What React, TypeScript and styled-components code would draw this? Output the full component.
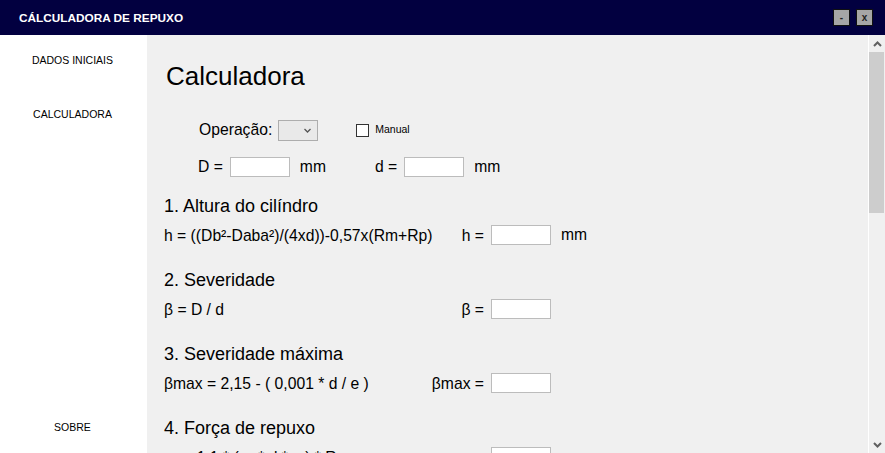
import * as React from 'react';
import styled, { createGlobalStyle } from 'styled-components';

const GlobalStyle = createGlobalStyle`
    html, body {
        margin: 0;
        padding: 0;
        background: #ffffff;
    }
    body {
        font-family: "Liberation Sans", Arial, sans-serif;
        color: #000;
    }
`;

const Window = styled.div`
    width: 885px;
    height: 453px;
    display: flex;
    flex-direction: column;
    overflow: hidden;
`;

const TitleBar = styled.div`
    height: 35px;
    flex: 0 0 35px;
    background: #020040;
    display: flex;
    align-items: center;
    padding: 0 12px 0 19px;
`;

const Title = styled.div`
    color: #ffffff;
    font-weight: bold;
    font-size: 11.8px;
    flex: 1;
`;

const WinButton = styled.div`
    width: 15px;
    height: 15px;
    border: 1px solid #111;
    background: #a6a6a6;
    margin-left: 6px;
    display: flex;
    align-items: center;
    justify-content: center;
    font-size: 10px;
    font-weight: bold;
    color: #222;
    line-height: 1;
`;

const Body = styled.div`
    flex: 1;
    display: flex;
    min-height: 0;
`;

const Sidebar = styled.nav`
    width: 147px;
    flex: 0 0 147px;
    background: #ffffff;
    display: flex;
    flex-direction: column;
    padding: 17px 2px 18px 0;
    box-sizing: border-box;
`;

const NavItem = styled.div<{ $bottom?: boolean }>`
    height: 16px;
    line-height: 16px;
    font-size: 10.5px;
    text-align: center;
    color: #000;
    margin-bottom: 38px;
    ${(props) => props.$bottom && 'margin-top: auto; margin-bottom: 0;'}
`;

const Panel = styled.main`
    flex: 1;
    background: #f0f0f0;
    overflow: hidden;
    padding: 26px 0 0 17px;
    box-sizing: border-box;
`;

const PageTitle = styled.h1`
    margin: 0 0 0 2px;
    font-weight: normal;
    font-size: 26px;
    line-height: 30px;
    height: 30px;
`;

const Row = styled.div<{ $indent: number; $top: number }>`
    display: flex;
    align-items: center;
    height: 20px;
    margin-left: ${(props) => props.$indent}px;
    margin-top: ${(props) => props.$top}px;
    font-size: 15.7px;
`;

const Label = styled.span<{ $gap?: number }>`
    margin-left: ${(props) => props.$gap || 0}px;
    margin-right: 7px;
    white-space: nowrap;
`;

const TextBox = styled.div<{ $width?: number }>`
    width: ${(props) => props.$width || 60}px;
    height: 20px;
    box-sizing: border-box;
    border: 1px solid #bcbcbc;
    background: #ffffff;
    flex: 0 0 auto;
`;

const Unit = styled.span`
    margin-left: 10px;
`;

const Select = styled.div`
    width: 40px;
    height: 21px;
    box-sizing: border-box;
    border: 1px solid #adadad;
    background: #e9e9e9;
    display: flex;
    align-items: center;
    justify-content: flex-end;
    padding-right: 6px;
    margin-left: -1px;
`;

const CheckBox = styled.div`
    width: 13px;
    height: 13px;
    box-sizing: border-box;
    border: 1px solid #333;
    background: #ffffff;
    margin-left: 38px;
`;

const SmallLabel = styled.span`
    font-size: 10.5px;
    margin-left: 6px;
    margin-top: -3px;
`;

const Section = styled.section<{ $top: number }>`
    margin-top: ${(props) => props.$top}px;
`;

const Heading = styled.h2`
    margin: 0;
    font-weight: normal;
    font-size: 18px;
    line-height: 22px;
    height: 22px;
`;

const FormulaRow = styled.div`
    display: grid;
    grid-template-columns: 248px 79px 60px auto;
    align-items: center;
    height: 20px;
    margin-top: 8px;
    font-size: 15.7px;
`;

const Formula = styled.span`
    white-space: nowrap;
    padding-top: 2px;
`;

const ResultLabel = styled.span`
    text-align: right;
    padding: 2px 7px 0 0;
    white-space: nowrap;
`;

const ScrollBar = styled.div`
    width: 17px;
    flex: 0 0 17px;
    box-sizing: border-box;
    border-left: 1px solid #ffffff;
    background: #f0f0f0;
    display: flex;
    flex-direction: column;
`;

const ScrollArrow = styled.div`
    height: 17px;
    display: flex;
    align-items: center;
    justify-content: center;
`;

const ScrollTrack = styled.div`
    flex: 1;
    padding-right: 1px;
`;

const ScrollThumb = styled.div`
    height: 161px;
    background: #cdcdcd;
`;

const Chevron = ({ up }: { up?: boolean }) => (
    <svg width="9" height="6" viewBox="0 0 9 6">
        <path d={up ? 'M1 5 L4.5 1.5 L8 5' : 'M1 1 L4.5 4.5 L8 1'} fill="none" stroke="#606060" strokeWidth="2" />
    </svg>
);

const sections = [
    { title: '1. Altura do cilíndro', formula: 'h = ((Db²-Daba²)/(4xd))-0,57x(Rm+Rp)', result: 'h =', unit: 'mm', top: 18 },
    { title: '2. Severidade', formula: 'β = D / d', result: 'β =', top: 24 },
    { title: '3. Severidade máxima', formula: 'βmax = 2,15 - ( 0,001 * d / e )', result: 'βmax =', top: 24 },
    { title: '4. Força de repuxo', formula: 'σr = 1,1 * ( π * d * e ) * Rm', result: 'σr =', top: 24 },
];

export default function App() {
    return (
        <Window>
            <GlobalStyle />
            <TitleBar>
                <Title>CÁLCULADORA DE REPUXO</Title>
                <WinButton>-</WinButton>
                <WinButton>x</WinButton>
            </TitleBar>
            <Body>
                <Sidebar>
                    <NavItem>DADOS INICIAIS</NavItem>
                    <NavItem>CALCULADORA</NavItem>
                    <NavItem $bottom>SOBRE</NavItem>
                </Sidebar>
                <Panel>
                    <PageTitle>Calculadora</PageTitle>
                    <Row $indent={35} $top={29}>
                        <Label>Operação:</Label>
                        <Select>
                            <svg width="7" height="5" viewBox="0 0 7 5">
                                <path d="M0.5 1 L3.5 4 L6.5 1" fill="none" stroke="#555" strokeWidth="1.3" />
                            </svg>
                        </Select>
                        <CheckBox />
                        <SmallLabel>Manual</SmallLabel>
                    </Row>
                    <Row $indent={34} $top={17}>
                        <Label>D =</Label>
                        <TextBox />
                        <Unit>mm</Unit>
                        <Label $gap={49}>d =</Label>
                        <TextBox />
                        <Unit>mm</Unit>
                    </Row>
                    {sections.map((s) => (
                        <Section key={s.title} $top={s.top}>
                            <Heading>{s.title}</Heading>
                            <FormulaRow>
                                <Formula>{s.formula}</Formula>
                                <ResultLabel>{s.result}</ResultLabel>
                                <TextBox />
                                {s.unit ? <Unit>{s.unit}</Unit> : <span />}
                            </FormulaRow>
                        </Section>
                    ))}
                </Panel>
                <ScrollBar>
                    <ScrollArrow><Chevron up /></ScrollArrow>
                    <ScrollTrack>
                        <ScrollThumb />
                    </ScrollTrack>
                    <ScrollArrow><Chevron /></ScrollArrow>
                </ScrollBar>
            </Body>
        </Window>
    );
}
